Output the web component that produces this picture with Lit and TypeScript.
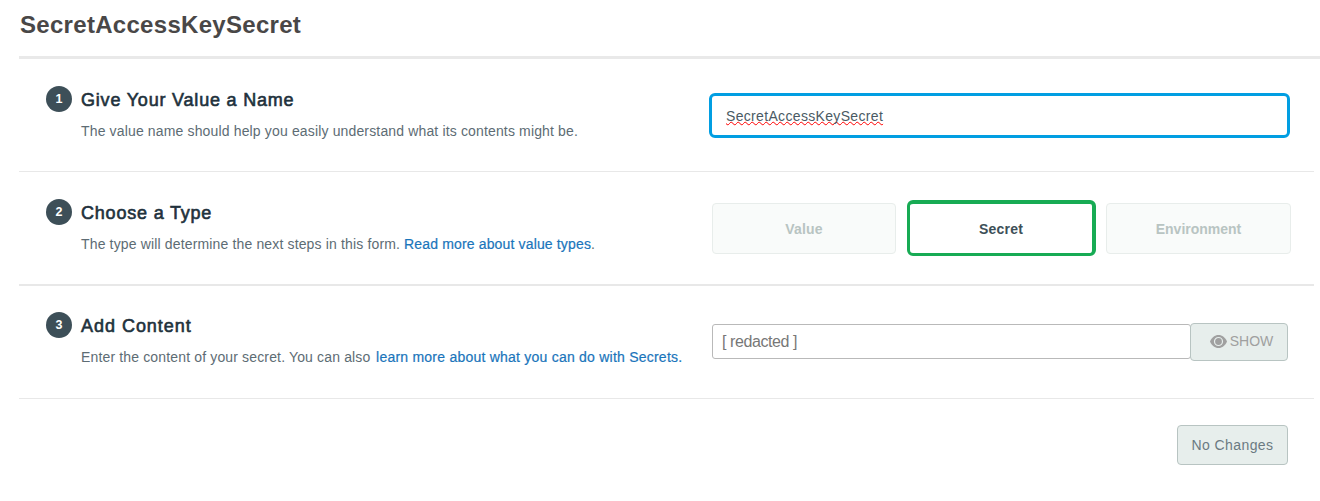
import { LitElement, html, css } from "lit";
import { customElement, property } from "lit/decorators.js";

@customElement("form-step")
class FormStep extends LitElement {
  @property() number = "";
  @property() heading = "";

  static styles = css`
    :host {
      display: flex;
      box-sizing: border-box;
      height: 113px;
      padding: 27px 0 0 27px;
    }
    .badge {
      flex: none;
      width: 26px;
      height: 26px;
      margin-right: 9px;
      border-radius: 50%;
      background: #3d4f58;
      color: #fff;
      font-size: 12.5px;
      font-weight: 700;
      line-height: 26px;
      text-align: center;
    }
    .text {
      flex: none;
      width: 628px;
      white-space: nowrap;
    }
    .heading {
      margin: 2px 0 0;
      font-size: 18px;
      font-weight: 400;
      line-height: 24px;
      letter-spacing: var(--heading-spacing, 0.8px);
      color: #21313c;
      -webkit-text-stroke: 0.6px #21313c;
    }
    .description {
      margin: 9px 0 0;
      font-size: 14px;
      line-height: 20px;
      letter-spacing: 0.15px;
      color: #5d6c74;
    }
  `;

  render() {
    return html`
      <div class="badge">${this.number}</div>
      <div class="text">
        <h2 class="heading">${this.heading}</h2>
        <p class="description"><slot name="description"></slot></p>
      </div>
      <slot></slot>
    `;
  }
}

@customElement("app-root")
class AppRoot extends LitElement {
  static styles = css`
    :host {
      display: block;
      box-sizing: border-box;
      width: 1320px;
      height: 501px;
      padding-left: 19px;
      overflow: hidden;
      background: #fff;
      font-family: "Liberation Sans", Arial, sans-serif;
    }
    .title {
      box-sizing: border-box;
      height: 59px;
      margin: 0;
      padding: 11px 0 0 1px;
      border-bottom: 3px solid #e9e9e9;
      font-size: 24px;
      font-weight: 700;
      line-height: 28px;
      letter-spacing: 0.3px;
      color: #494747;
    }
    .step {
      width: 1295px;
      border-bottom: 1px solid #e8e8e8;
    }
    .step.thick {
      height: 114px;
      border-bottom: 2px solid #e8e8e8;
    }
    .step.last {
      --heading-spacing: 0.97px;
      padding-top: 26px;
    }
    a {
      color: #1a75bb;
      text-decoration: none;
      -webkit-text-stroke: 0.2px #1a75bb;
    }
    .secrets-link {
      letter-spacing: 0.23px;
      margin-left: 1.6px;
    }
    .name {
      box-sizing: border-box;
      width: 581px;
      height: 45px;
      margin: 7px 0 0;
      padding-left: 14px;
      border: 3px solid #019ee2;
      border-radius: 6px;
      font-size: 14px;
      line-height: 41px;
      letter-spacing: 0.33px;
      color: #4a5a64;
    }
    .misspelled {
      text-decoration: underline wavy #f00 1px;
      text-decoration-skip-ink: none;
      text-underline-offset: 0;
    }
    .types {
      display: flex;
      align-items: center;
      height: 56px;
      margin: 1px 0 0 3px;
    }
    .type {
      box-sizing: border-box;
      width: 184px;
      height: 51px;
      padding: 2px 0 0;
      border: 1px solid #e8edeb;
      border-radius: 4px;
      background: #f9fbfa;
      color: #b8c4c2;
      font: 700 14px "Liberation Sans", Arial, sans-serif;
      letter-spacing: 0.2px;
    }
    .type.selected {
      width: 189px;
      height: 56px;
      margin: 0 10px 0 11px;
      padding: 0;
      border: 3px solid #17ab54;
      border-top-width: 4px;
      border-right-width: 4px;
      border-radius: 6px;
      background: #fff;
      color: #3d4f58;
    }
    .type.last {
      width: 185px;
      letter-spacing: 0;
    }
    .content {
      display: flex;
      align-items: flex-start;
      margin: 11px 0 0 3px;
    }
    .value {
      box-sizing: border-box;
      width: 479px;
      height: 35px;
      margin: 1px -1px 0 0;
      padding-left: 9px;
      border: 1px solid #b9b9b9;
      border-radius: 3px;
      font-size: 16px;
      line-height: 34px;
      letter-spacing: -0.42px;
      color: #777;
    }
    .button {
      display: flex;
      align-items: center;
      justify-content: center;
      box-sizing: border-box;
      padding: 0;
      border: 1px solid #b8c4c2;
      border-radius: 4px;
      background: #e7eeec;
      font: 400 14px "Liberation Sans", Arial, sans-serif;
    }
    .show {
      width: 98px;
      height: 38px;
      padding: 0 0 1px 5px;
      gap: 3px;
      color: #a0a0a0;
    }
    .show-label {
      margin-bottom: 2px;
    }
    .footer {
      display: flex;
      justify-content: flex-end;
      padding: 26px 32px 0 0;
    }
    .save {
      width: 111px;
      height: 40px;
      color: #6b7a82;
      letter-spacing: 0.4px;
    }
  `;

  render() {
    return html`
      <h1 class="title">SecretAccessKeySecret</h1>
      <form-step class="step" number="1" heading="Give Your Value a Name">
        <span slot="description">The value name should help you easily understand what its contents might be.</span>
        <div class="name"><span class="misspelled">SecretAccessKeySecret</span></div>
      </form-step>
      <form-step class="step thick" number="2" heading="Choose a Type">
        <span slot="description">The type will determine the next steps in this form. <a>Read more about value types</a>.</span>
        <div class="types">
          <button class="type">Value</button>
          <button class="type selected">Secret</button>
          <button class="type last">Environment</button>
        </div>
      </form-step>
      <form-step class="step last" number="3" heading="Add Content">
        <span slot="description">Enter the content of your secret. You can also <a class="secrets-link">learn more about what you can do with Secrets.</a></span>
        <div class="content">
          <div class="value">[ redacted ]</div>
          <button class="button show">
            <svg width="17" height="13" viewBox="0 0 17 13">
              <path fill="#a0a0a0" d="M0 6.5C1.7 2.4 4.8 0 8.5 0S15.3 2.4 17 6.5C15.3 10.6 12.2 13 8.5 13S1.7 10.6 0 6.5Z" />
              <circle cx="8.5" cy="6.5" r="4" fill="#a0a0a0" stroke="#e7eeec" stroke-width="1.2" />
            </svg>
            <span class="show-label">SHOW</span>
          </button>
        </div>
      </form-step>
      <div class="footer"><button class="button save">No Changes</button></div>
    `;
  }
}
